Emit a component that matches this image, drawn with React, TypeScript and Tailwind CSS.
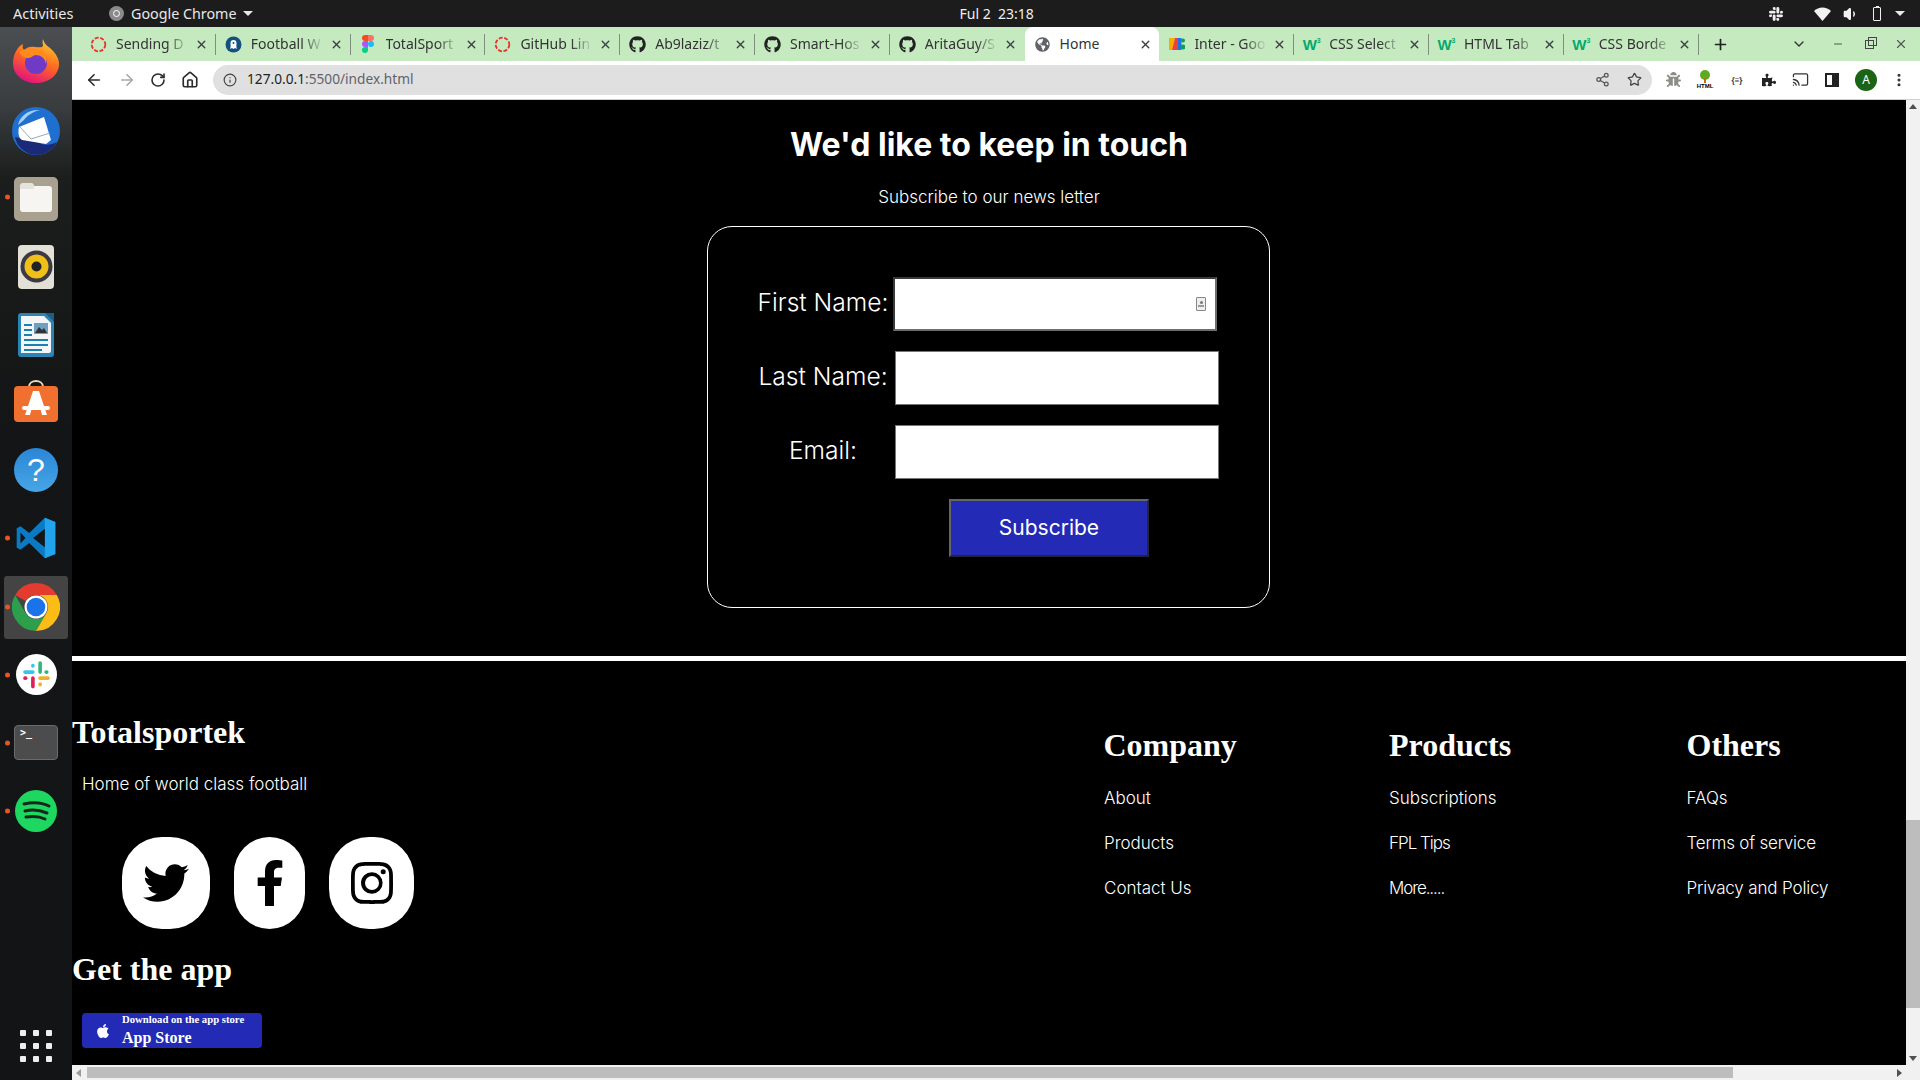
import React from "react";
import { FaGithub, FaTwitter, FaFacebookF, FaApple, FaPuzzlePiece, FaBug, FaGlobeAmericas } from "react-icons/fa";
import { BsInstagram } from "react-icons/bs";
import { SiSlack } from "react-icons/si";
import { ArrowLeft, ArrowRight, RotateCw, Home, Info, Share2, Star, MoreVertical, ChevronDown, Minus, X, Plus, Cast, Volume1 } from "lucide-react";

const Spin = () => (
  <svg width="17" height="17" viewBox="0 0 17 17"><circle cx="8.5" cy="8.5" r="6.8" fill="none" stroke="#e8332a" strokeWidth="1.8" strokeDasharray="4 1.6" /></svg>
);
const Octo = () => (
  <svg width="17" height="17" viewBox="0 0 17 17"><circle cx="8.5" cy="8.5" r="8" fill="#14507f" /><path d="M5 13c1-2 .5-4 .5-6a3 3 0 0 1 6 0c0 2-.5 4 .5 6l-2-1-1.500 1-1.500-1z" fill="#fff" /><circle cx="8.500" cy="7" r="1" fill="#14507f" /></svg>
);
const Figma = () => (
  <svg width="12" height="18" viewBox="0 0 12 18"><path d="M0 3a3 3 0 0 1 3-3h3v6H3a3 3 0 0 1-3-3z" fill="#f24e1e" /><path d="M6 0h3a3 3 0 0 1 0 6H6z" fill="#ff7262" /><path d="M0 9a3 3 0 0 1 3-3h3v6H3a3 3 0 0 1-3-3z" fill="#a259ff" /><circle cx="9" cy="9" r="3" fill="#1abcfe" /><path d="M0 15a3 3 0 0 1 3-3h3v3a3 3 0 0 1-6 0z" fill="#0acf83" /></svg>
);
const Fonts = () => (
  <svg width="16" height="16" viewBox="0 0 16 16"><path d="M0 2h6L3 14H0z" fill="#f9ab00" /><path d="M6 2h3v12H3z" fill="#ea4335" /><rect x="9" y="2" width="3.500" height="12" fill="#1a73e8" /><circle cx="14" cy="4.500" r="2" fill="#0f9d58" /><circle cx="14" cy="11" r="2.500" fill="#0f9d58" /></svg>
);
const W3 = () => (
  <span className="flex w-[18px] items-start justify-center font-['Liberation_Sans'] text-[15px] leading-[15px] font-bold text-[#04aa6d]">W<span className="text-[7px] leading-[8px]">3</span></span>
);

const tabs: { t: string; i: React.ReactNode; a?: boolean }[] = [
  { t: "Sending D", i: <Spin /> },
  { t: "Football W", i: <Octo /> },
  { t: "TotalSport", i: <Figma /> },
  { t: "GitHub Lin", i: <Spin /> },
  { t: "Ab9laziz/t", i: <FaGithub size={17} color="#222" /> },
  { t: "Smart-Hos", i: <FaGithub size={17} color="#222" /> },
  { t: "AritaGuy/S", i: <FaGithub size={17} color="#222" /> },
  { t: "Home", i: <FaGlobeAmericas size={15} color="#5f6368" />, a: true },
  { t: "Inter - Goo", i: <Fonts /> },
  { t: "CSS Select", i: <W3 /> },
  { t: "HTML Tab", i: <W3 /> },
  { t: "CSS Borde", i: <W3 /> },
];

function Tab({ t, i, a, sep }: { t: string; i: React.ReactNode; a?: boolean; sep: boolean }) {
  return (
    <div className={`relative flex h-[34px] w-[134.8px] shrink-0 items-center ${a ? "rounded-t-[8px] bg-white" : ""}`}>
      <div className="flex w-[35px] shrink-0 justify-center">{i}</div>
      <div className={`w-[73px] -translate-y-[1px] overflow-hidden text-[14px] whitespace-nowrap text-[#333] ${a ? "" : "[mask-image:linear-gradient(to_right,black_70%,transparent_100%)]"}`}>{t}</div>
      <X size={13} strokeWidth={2.6} color="#3c4043" className="ml-[6px]" />
      {sep && <div className="absolute top-[7px] right-0 h-[21px] w-px bg-[#7f8f7d]" />}
    </div>
  );
}

const Dot = ({ y }: { y?: boolean }) => (y ? <div className="absolute top-1/2 left-[5px] h-[5px] w-[5px] -translate-y-1/2 rounded-full bg-[#e95420]" /> : null);

const dock: { n: React.ReactNode; d?: boolean; on?: boolean; s?: string }[] = [
  { n: (
    <svg width="46" height="46" viewBox="0 0 46 46"><defs><linearGradient id="ff" x1="0.8" y1="0" x2="0.35" y2="1"><stop offset="0" stopColor="#ffd02e" /><stop offset="0.5" stopColor="#ff6a1f" /><stop offset="1" stopColor="#e3127e" /></linearGradient></defs><path d="M30 1c1 4 3 6 7 9 6 5 9 11 9 16 0 11-10 19-23 19S0 37 0 25C0 17 4 9 10 6c-1 3 0 5 1 6 3-3 7-4 11-3 4 0 7 1 8-1 0-2-1-4 0-7z" fill="url(#ff)" /><circle cx="23" cy="25" r="11" fill="#6f3bc6" /><path d="M6 14c6-4 17-5 24 0 4 3 4 8 3 12-1-6-5-9-11-9-3 1-4 3-7 3-4 0-7-3-9-6z" fill="#ff8a1e" /></svg>
  ) },
  { s: "translate-y-[2px]", n: (
    <svg width="48" height="48" viewBox="0 0 48 48"><circle cx="24" cy="24" r="24" fill="#1f6fd0" /><path d="M3 30a22 22 0 0 0 34 14c3-2 6-5 8-9-8 4-14 3-20 0z" fill="#1b2a78" /><path d="M7 20 32 10l7 23-5 4-24-4c-4-2-4-9-3-13z" fill="#fff" /><path d="M8 20l11 12 19-6" fill="none" stroke="#9aa7bd" strokeWidth="1" /><path d="M6 18C8 8 18 2 28 3c-8 2-13 6-16 10-2 2-4 3-6 5z" fill="#9fd2f5" /></svg>
  ) },
  { d: true, s: "translate-y-[2px]", n: (
    <div className="flex h-[44px] w-[44px] items-center justify-center rounded-[5px] bg-[#a8a18f]"><div className="relative h-[26px] w-[32px] rounded-[3px] bg-[#f6f5f2] before:absolute before:-top-[3px] before:left-0 before:h-[6px] before:w-[14px] before:rounded-t-[3px] before:bg-[#e6e3de]" /></div>
  ) },
  { s: "translate-y-[1px]", n: (
    <div className="flex h-[44px] w-[36px] items-center justify-center rounded-[4px] bg-[#e3e0d7]"><svg width="33" height="33" viewBox="0 0 33 33"><circle cx="16.500" cy="16.500" r="16" fill="#3b3a44" /><circle cx="16.500" cy="16.500" r="12" fill="#f0bf1a" /><circle cx="16.500" cy="16.500" r="5" fill="#222" /></svg></div>
  ) },
  { s: "translate-y-[1px]", n: (
    <svg width="36" height="44" viewBox="0 0 36 44"><path d="M3 0h33v41a3 3 0 0 1-3 3H3a3 3 0 0 1-3-3V3a3 3 0 0 1 3-3z" fill="#2a85b5" /><path d="M3 3h23l7 7v28a2 2 0 0 1-2 2H3z" fill="#f3f5f7" /><path d="M27 0h9v9z" fill="#1c5f86" /><path d="M6 11h8v2H6zM6 16h8v2H6zM6 21h8v2H6zM6 26h24v2H6zM6 31h24v2H6zM6 36h18v2H6z" fill="#1b7fb0" /><rect x="16" y="10" width="14" height="11" fill="#6ea0c4" /><path d="M17 20l4-6 3 3 2-2 3 5z" fill="#333" /></svg>
  ) },
  { s: "-translate-y-[1px]", n: (
    <svg width="44" height="42" viewBox="0 0 44 42"><path d="M15 7c0-8 14-8 14 0" fill="none" stroke="#e9d7b8" strokeWidth="2" /><rect y="6" width="44" height="36" rx="4" fill="#f0712f" /><path d="M19 11h6l8 24h-5l-2-8h-8l-2 8h-5z" fill="#fff" /><rect x="8" y="26" width="28" height="4" rx="2" fill="#fff" /></svg>
  ) },
  { n: (
    <div className="flex h-[44px] w-[44px] items-center justify-center rounded-full bg-[linear-gradient(#2a86d6,#47a6e6)] font-['Liberation_Sans'] text-[32px] leading-none text-white">?</div>
  ) },
  { d: true, n: (
    <svg width="42" height="42" viewBox="0 0 100 100"><path d="M71 2 34 38 13 22 4 27v46l9 5 21-16 37 36 25-10V12z" fill="#0b7ac4" /><path d="M71 2v96l25-10V12z" fill="#22a3ee" /><path d="M71 28 43 50l28 22z" fill="#141618" /><path d="M13 37v26l12-13z" fill="#141618" /></svg>
  ) },
  { d: true, on: true, n: (
    <svg width="48" height="48" viewBox="0 0 48 48"><path d="M24 0a24 24 0 0 1 20.800 12H24a12 12 0 0 0-10.400 6L3.200 12A24 24 0 0 1 24 0z" fill="#e33b2e" /><path d="M3.200 12A24 24 0 0 0 24 48l10.400-18a12 12 0 0 1-20.800 0z" fill="#2d9f4c" /><path d="M44.800 12H24a12 12 0 0 1 10.400 18L24 48a24 24 0 0 0 20.800-36z" fill="#fbbc16" /><circle cx="24" cy="24" r="11.500" fill="#fff" /><circle cx="24" cy="24" r="9.300" fill="#1a73e8" /></svg>
  ) },
  { d: true, n: (
    <div className="flex h-[41px] w-[41px] items-center justify-center rounded-full bg-white"><svg width="29" height="29" viewBox="0 0 24 24"><rect x="1" y="8.500" width="9.500" height="3" rx="1.500" fill="#36c5f0" /><rect x="7.500" y="3" width="3" height="3.500" rx="1.500" fill="#36c5f0" /><rect x="13.500" y="1" width="3" height="10.500" rx="1.500" fill="#2eb67d" /><rect x="18.500" y="8.500" width="3.500" height="3" rx="1.500" fill="#2eb67d" /><rect x="13.500" y="13.500" width="9.500" height="3" rx="1.500" fill="#ecb22e" /><rect x="13.500" y="18.500" width="3" height="3.500" rx="1.500" fill="#ecb22e" /><rect x="7.500" y="13.500" width="3" height="10" rx="1.500" fill="#e01e5a" /><rect x="1" y="13.500" width="3.500" height="3" rx="1.500" fill="#e01e5a" /></svg></div>
  ) },
  { d: true, n: (
    <div className="h-[35px] w-[44px] rounded-[4px] border border-[#6a6a6a] bg-[#4c4c4c] pl-[5px] font-['DejaVu_Sans_Mono'] text-[10px] leading-[14px] font-bold text-white">&gt;_</div>
  ) },
  { d: true, n: (
    <svg width="42" height="42" viewBox="0 0 42 42"><circle cx="21" cy="21" r="21" fill="#1ed760" /><path d="M9 14c8-2 17-2 25 2M10 21c7-2 15-1 22 2M11 27c6-1 13-1 19 2" fill="none" stroke="#16281d" strokeWidth="3" strokeLinecap="round" /></svg>
  ) },
];

const Field = ({ label, first }: { label: string; first?: boolean }) => (
  <div className="flex h-[54px] items-center">
    <div className="w-[144px] -translate-y-[2px] text-center text-[24.600px] whitespace-nowrap text-white">{label}</div>
    {first ? (
      <div className="relative -ml-[2px] flex h-[54px] w-[324px] items-center justify-end border-2 border-[#3a3a3a] border-r-[#6e6e6e] border-b-[#6e6e6e] bg-white pr-[9px]">
        <div className="flex h-[14px] w-[10px] flex-col items-center justify-center rounded-[1px] border border-[#888] bg-[#eee]"><div className="h-[3px] w-[3px] rounded-full bg-[#777]" /><div className="mt-[1px] h-[2px] w-[6px] bg-[#999]" /></div>
      </div>
    ) : (
      <div className="h-[54px] w-[324px] border border-[#777] bg-white" />
    )}
  </div>
);

const Col = ({ title, links, w }: { title: string; links: [string, string][]; w: string }) => (
  <div className={`${w} shrink-0 pt-[66px]`}>
    <div className="font-['Liberation_Serif'] text-[32px] leading-[37px] font-bold text-white">{title}</div>
    <div className="mt-[22px] flex flex-col gap-[21px]">
      {links.map(([l, c]) => (
        <div key={l} className={`h-[24px] text-[17px] leading-[24px] font-light whitespace-nowrap text-white ${c}`}>{l}</div>
      ))}
    </div>
  </div>
);

export default function App() {
  return (
    <div className="flex h-[1080px] w-[1920px] flex-col overflow-hidden bg-black font-['Noto_Sans',sans-serif]">
      {/* system bar */}
      <div className="relative flex h-[27px] shrink-0 items-center bg-[#1c1c1c] text-[14px] text-[#e8e8e8]">
        <div className="ml-[13px] w-[96px] text-[14.500px]">Activities</div>
        <div className="flex h-[15px] w-[15px] items-center justify-center rounded-full bg-[#8a8a8a]"><div className="h-[7px] w-[7px] rounded-full border border-white" /></div>
        <div className="ml-[7px] text-[14.300px]">Google Chrome</div>
        <div className="ml-[6px] h-0 w-0 border-x-[5px] border-t-[5px] border-x-transparent border-t-[#e8e8e8]" />
        <div className="ml-[707px] whitespace-pre text-[#f0f0f0]">Ful 2  23:18</div>
        <div className="ml-auto flex items-center">
          <SiSlack size={14} color="#eee" />
          <svg width="17" height="14" viewBox="0 0 17 14" className="ml-[31px]"><path d="M0 4a12 12 0 0 1 17 0L8.500 14z" fill="#f2f2f2" /></svg>
          <Volume1 size={16} color="#f2f2f2" fill="#f2f2f2" className="ml-[12px]" />
          <div className="relative ml-[14px] h-[14px] w-[8px] rounded-[1px] border border-[#eee] before:absolute before:-top-[2px] before:left-[1.500px] before:h-[2px] before:w-[3px] before:bg-[#eee]" />
          <div className="mr-[15px] ml-[14px] h-0 w-0 border-x-[5px] border-t-[5px] border-x-transparent border-t-[#e8e8e8]" />
        </div>
      </div>

      <div className="flex min-h-0 flex-1">
        {/* dock */}
        <div className="flex w-[72px] shrink-0 flex-col bg-[linear-gradient(#4b4e52_0px,#3a3d3f_80px,#1b1e1c_150px,#141516_400px,#131415_100%)]">
          {dock.map((it, k) => (
            <div key={k} className="relative flex h-[68.200px] shrink-0 items-center justify-center">
              {it.on && <div className="absolute top-[3px] left-[4px] h-[63px] w-[64px] rounded-[3px] bg-[#444444]" />}
              <Dot y={it.d} />
              <div className={`relative ${it.s ?? ""}`}>{it.n}</div>
            </div>
          ))}
          <div className="mt-auto mb-[18px] grid w-[32px] grid-cols-3 gap-[7px] self-center">
            {Array.from({ length: 9 }).map((_, k) => (
              <div key={k} className="h-[6px] w-[6px] rounded-[1px] bg-[#eeeeee]" />
            ))}
          </div>
        </div>

        {/* browser */}
        <div className="flex min-w-0 flex-1 flex-col">
          <div className="flex h-[34px] shrink-0 items-center bg-[#c5eac0] pl-[9px]">
            {tabs.map((x, k) => (
              <Tab key={k} t={x.t} i={x.i} a={x.a} sep={!x.a && k !== 6} />
            ))}
            <Plus size={17} strokeWidth={2.4} color="#222" className="ml-[13px]" />
            <ChevronDown size={16} strokeWidth={2} color="#333" className="ml-[62px]" />
            <Minus size={12} strokeWidth={2} color="#555" className="ml-[25px]" />
            <div className="relative ml-[21px] h-[9px] w-[9px] border-[1.5px] border-[#444] before:absolute before:-top-[4px] before:-right-[4px] before:h-[9px] before:w-[9px] before:border-[1.5px] before:border-[#444]" />
            <X size={14} strokeWidth={2} color="#555" className="ml-[20px]" />
          </div>

          <div className="flex h-[39px] shrink-0 items-center border-b border-[#d0d0d0] bg-white pb-[1px]">
            <ArrowLeft size={18} strokeWidth={2.2} color="#2c2c2c" className="ml-[13px]" />
            <ArrowRight size={18} strokeWidth={2.2} color="#a8a8a8" className="ml-[15px]" />
            <RotateCw size={16} strokeWidth={2.4} color="#2c2c2c" className="ml-[14px]" />
            <Home size={18} strokeWidth={2.2} color="#2c2c2c" className="ml-[15px]" />
            <div className="ml-[14px] flex h-[30px] w-[1439px] items-center rounded-full bg-[#e0e0e0]">
              <Info size={14} color="#444" className="ml-[10px]" />
              <div className="ml-[10px] text-[13.700px] text-[#222]">127.0.0.1<span className="text-[#5f6368]">:5500/index.html</span></div>
              <Share2 size={15} color="#555" className="ml-auto" />
              <Star size={15} color="#444" strokeWidth={2} className="mr-[10px] ml-[17px]" />
            </div>
            <FaBug size={15} color="#8d8d85" className="ml-[14px]" />
            <div className="ml-[15px] flex w-[18px] flex-col items-center">
              <svg width="14" height="13" viewBox="0 0 14 13"><circle cx="7" cy="5" r="5" fill="#5faa1e" /><rect x="6" y="8" width="2" height="5" fill="#c66a1e" /></svg>
              <div className="font-['Liberation_Sans'] text-[6px] leading-[6px] font-bold text-black">HTML</div>
            </div>
            <div className="ml-[15px] w-[16px] text-center text-[8px] font-bold text-[#333]">{"{≡}"}</div>
            <FaPuzzlePiece size={14} color="#222" className="ml-[17px]" />
            <Cast size={17} color="#333" strokeWidth={1.8} className="ml-[16px]" />
            <div className="ml-[16px] flex h-[14px] w-[14px] border-2 border-[#222]"><div className="ml-auto h-full w-[5px] bg-[#222]" /></div>
            <div className="ml-[16px] flex h-[22px] w-[22px] items-center justify-center rounded-full bg-[#1b6416] text-[12px] text-white">A</div>
            <MoreVertical size={16} strokeWidth={2.6} color="#333" className="ml-[14px]" />
          </div>

          <div className="flex min-h-0 flex-1">
            {/* page */}
            <div className="min-w-0 flex-1 overflow-hidden bg-black font-['Inter',sans-serif]">
              <div className="pt-[25px] text-center text-[32px] leading-[40px] font-bold text-white">We'd like to keep in touch</div>
              <div className="mt-[20px] text-center text-[17px] leading-[24px] font-light text-white">Subscribe to our news letter</div>
              <div className="mt-[17px] ml-[635px] h-[382px] w-[563px] rounded-[25px] border border-white pt-[50px] pl-[43px] font-light">
                <div className="flex flex-col gap-[20px]">
                  <Field label="First Name:" first />
                  <Field label="Last Name:" />
                  <Field label="Email:" />
                </div>
                <div className="mt-[20px] ml-[198px] flex h-[58px] w-[200px] items-center justify-center border-2 border-[#666] border-r-[#23243c] border-b-[#23243c] bg-[#232ab5] text-[21px] font-normal text-white">Subscribe</div>
              </div>
              <div className="mt-[48px] h-[5px] bg-white" />
              <div className="flex">
                <div className="w-[1031.500px] shrink-0 pt-[53px]">
                  <div className="font-['Liberation_Serif'] text-[32px] leading-[37px] font-bold text-white">Totalsportek</div>
                  <div className="mt-[21px] ml-[10px] text-[17px] leading-[24px] font-light text-white">Home of world class football</div>
                  <div className="mt-[41px] ml-[50px] flex items-center text-black">
                    <div className="flex h-[92px] w-[88px] items-center justify-center rounded-[40px] bg-white"><FaTwitter size={46} /></div>
                    <div className="ml-[24px] flex h-[92px] w-[71px] items-center justify-center rounded-[40px] bg-white"><FaFacebookF size={46} /></div>
                    <div className="ml-[24px] flex h-[92px] w-[85px] items-center justify-center rounded-[40px] bg-white"><BsInstagram size={42} /></div>
                  </div>
                  <div className="mt-[22px] font-['Liberation_Serif'] text-[32px] leading-[37px] font-bold text-white">Get the app</div>
                  <div className="mt-[25px] ml-[10px] flex h-[35px] w-[180px] items-center rounded-[4px] bg-[#232ab5] font-['Liberation_Serif'] font-bold text-white">
                    <FaApple size={16} className="ml-[13px]" />
                    <div className="ml-[11px]">
                      <div className="text-[10.700px] leading-[12px]">Download on the app store</div>
                      <div className="mt-[3px] text-[16px] leading-[20px]">App Store</div>
                    </div>
                  </div>
                </div>
                <Col w="w-[285.500px]" title="Company" links={[["About", "ml-[0.500px]"], ["Products", "ml-[0.500px]"], ["Contact Us", "ml-[0.500px]"]]} />
                <Col w="w-[297.500px]" title="Products" links={[["Subscriptions", ""], ["FPL Tips", "tracking-[-1px]"], ["More.....", "tracking-[-1.100px]"]]} />
                <Col w="w-[219px]" title="Others" links={[["FAQs", ""], ["Terms of service", "tracking-[-0.200px]"], ["Privacy and Policy", "tracking-[-0.150px]"]]} />
              </div>
            </div>
            {/* vertical scrollbar */}
            <div className="flex w-[14px] shrink-0 flex-col items-center bg-[#f1f1f1]">
              <div className="mt-[4px] h-0 w-0 border-x-[4px] border-b-[5px] border-x-transparent border-b-[#505050]" />
              <div className="mt-[711px] h-[188px] w-full bg-[#bdbdbd]" />
              <div className="mt-auto mb-[4px] h-0 w-0 border-x-[4px] border-t-[5px] border-x-transparent border-t-[#505050]" />
            </div>
          </div>

          {/* horizontal scrollbar */}
          <div className="flex h-[15px] shrink-0 items-center bg-[#f1f1f1]">
            <div className="ml-[4px] h-0 w-0 border-y-[4px] border-r-[5px] border-y-transparent border-r-[#9a9a9a]" />
            <div className="ml-[6px] h-[11px] w-[1646px] bg-[#bdbdbd]" />
            <div className="mr-[18px] ml-auto h-0 w-0 border-y-[4px] border-l-[5px] border-y-transparent border-l-[#505050]" />
          </div>
        </div>
      </div>
    </div>
  );
}
